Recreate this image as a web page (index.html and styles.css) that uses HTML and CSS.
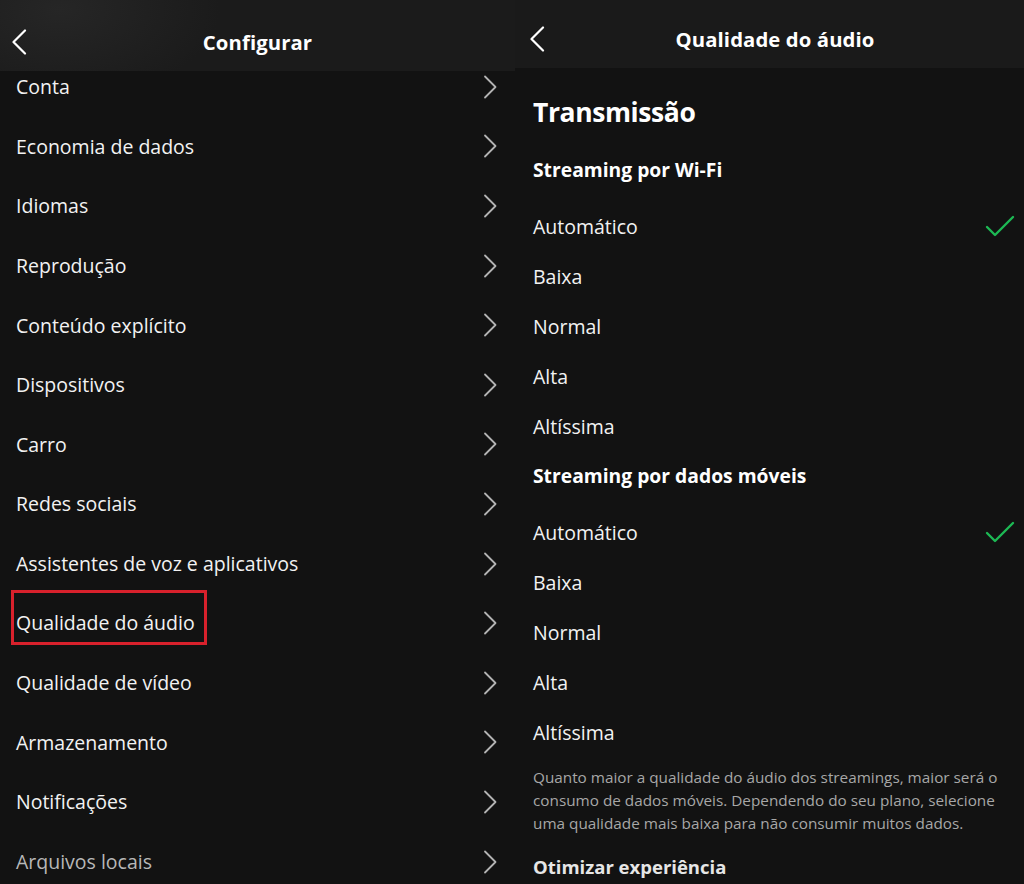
FILE: index.html
```html
<!DOCTYPE html>
<html lang="pt-BR">
<head>
    <meta charset="UTF-8">
    <meta name="viewport" content="width=device-width, initial-scale=1.0">
    <title>Configurar - Qualidade do áudio</title>
    <link rel="stylesheet" href="styles.css">
</head>
<body>
    <!-- Left screen: settings list -->
    <section class="screen screen-settings">
        <header class="top-bar top-bar-settings">
            <button class="back-btn" aria-label="Voltar">
                <svg width="16" height="26" viewBox="0 0 16 26" fill="none" stroke="currentColor" stroke-width="2.2" stroke-linecap="round" stroke-linejoin="round">
                    <polyline points="14 1.5 2.5 13 14 24.5"></polyline>
                </svg>
            </button>
            <h1 class="top-title">Configurar</h1>
        </header>

        <ul class="settings-list">
            <li class="settings-row"><span>Conta</span><svg class="chevron" viewBox="0 0 14 24"><polyline points="2 1.5 12.5 12 2 22.5"></polyline></svg></li>
            <li class="settings-row"><span>Economia de dados</span><svg class="chevron" viewBox="0 0 14 24"><polyline points="2 1.5 12.5 12 2 22.5"></polyline></svg></li>
            <li class="settings-row"><span>Idiomas</span><svg class="chevron" viewBox="0 0 14 24"><polyline points="2 1.5 12.5 12 2 22.5"></polyline></svg></li>
            <li class="settings-row"><span>Reprodução</span><svg class="chevron" viewBox="0 0 14 24"><polyline points="2 1.5 12.5 12 2 22.5"></polyline></svg></li>
            <li class="settings-row"><span>Conteúdo explícito</span><svg class="chevron" viewBox="0 0 14 24"><polyline points="2 1.5 12.5 12 2 22.5"></polyline></svg></li>
            <li class="settings-row"><span>Dispositivos</span><svg class="chevron" viewBox="0 0 14 24"><polyline points="2 1.5 12.5 12 2 22.5"></polyline></svg></li>
            <li class="settings-row"><span>Carro</span><svg class="chevron" viewBox="0 0 14 24"><polyline points="2 1.5 12.5 12 2 22.5"></polyline></svg></li>
            <li class="settings-row"><span>Redes sociais</span><svg class="chevron" viewBox="0 0 14 24"><polyline points="2 1.5 12.5 12 2 22.5"></polyline></svg></li>
            <li class="settings-row"><span>Assistentes de voz e aplicativos</span><svg class="chevron" viewBox="0 0 14 24"><polyline points="2 1.5 12.5 12 2 22.5"></polyline></svg></li>
            <li class="settings-row"><span class="highlight">Qualidade do áudio</span><svg class="chevron" viewBox="0 0 14 24"><polyline points="2 1.5 12.5 12 2 22.5"></polyline></svg></li>
            <li class="settings-row"><span>Qualidade de vídeo</span><svg class="chevron" viewBox="0 0 14 24"><polyline points="2 1.5 12.5 12 2 22.5"></polyline></svg></li>
            <li class="settings-row"><span>Armazenamento</span><svg class="chevron" viewBox="0 0 14 24"><polyline points="2 1.5 12.5 12 2 22.5"></polyline></svg></li>
            <li class="settings-row"><span>Notificações</span><svg class="chevron" viewBox="0 0 14 24"><polyline points="2 1.5 12.5 12 2 22.5"></polyline></svg></li>
            <li class="settings-row settings-row-faded"><span>Arquivos locais</span><svg class="chevron" viewBox="0 0 14 24"><polyline points="2 1.5 12.5 12 2 22.5"></polyline></svg></li>
        </ul>
    </section>

    <!-- Right screen: audio quality -->
    <section class="screen screen-quality">
        <header class="top-bar top-bar-quality">
            <button class="back-btn" aria-label="Voltar">
                <svg width="16" height="26" viewBox="0 0 16 26" fill="none" stroke="currentColor" stroke-width="2.2" stroke-linecap="round" stroke-linejoin="round">
                    <polyline points="14 1.5 2.5 13 14 24.5"></polyline>
                </svg>
            </button>
            <h1 class="top-title">Qualidade do áudio</h1>
        </header>

        <div class="quality-content">
            <h2 class="section-title">Transmissão</h2>

            <h3 class="group-title">Streaming por Wi-Fi</h3>
            <ul class="option-list">
                <li class="option selected">Automático<svg class="check" viewBox="0 0 30 24"><polyline points="2 13 10 21 28 3"></polyline></svg></li>
                <li class="option">Baixa</li>
                <li class="option">Normal</li>
                <li class="option">Alta</li>
                <li class="option">Altíssima</li>
            </ul>

            <h3 class="group-title">Streaming por dados móveis</h3>
            <ul class="option-list">
                <li class="option selected">Automático<svg class="check" viewBox="0 0 30 24"><polyline points="2 13 10 21 28 3"></polyline></svg></li>
                <li class="option">Baixa</li>
                <li class="option">Normal</li>
                <li class="option">Alta</li>
                <li class="option">Altíssima</li>
            </ul>

            <p class="hint">Quanto maior a qualidade do áudio dos streamings, maior será o consumo de dados móveis. Dependendo do seu plano, selecione uma qualidade mais baixa para não consumir muitos dados.</p>

            <h3 class="group-title group-title-next">Otimizar experiência</h3>
        </div>
    </section>
</body>
</html>
```

FILE: styles.css
```css
body {
    margin: 0;
    padding: 0;
    width: 1024px;
    height: 884px;
    overflow: hidden;
    background: #121212;
    font-family: 'Open Sans', 'Noto Sans', sans-serif;
    color: #ffffff;
    display: flex;
}

ul {
    list-style: none;
    margin: 0;
    padding: 0;
}

/* Screens */
.screen {
    display: flex;
    flex-direction: column;
    background: #121212;
    overflow: hidden;
}

.screen-settings {
    width: 515px;
}

.screen-quality {
    width: 509px;
}

/* Top bars */
.top-bar {
    position: relative;
    z-index: 2;
    display: flex;
    align-items: center;
    justify-content: center;
    flex-shrink: 0;
}

.top-bar-settings {
    height: 71px;
    background: radial-gradient(ellipse 160px 90px at 60px 10px, #262626 0%, #1b1b1b 100%);
}

.top-bar-quality {
    height: 68px;
    background: #1a1a1a;
    padding-left: 11px;
}

.top-title {
    margin: 0;
    font-size: 20.3px;
    font-weight: 700;
    letter-spacing: 0.1px;
}

.top-bar-settings .top-title {
    margin-top: 13px;
}

.top-bar-quality .top-title {
    margin-top: 10px;
}

.back-btn {
    position: absolute;
    top: 29px;
    left: 11px;
    width: 16px;
    height: 26px;
    padding: 0;
    background: none;
    border: none;
    color: #ffffff;
    cursor: pointer;
}

.top-bar-quality .back-btn {
    top: 26px;
    left: 14px;
}

/* Settings list */
.settings-list {
    margin-top: -14px;
}

.settings-row {
    height: 59.6px;
    display: flex;
    align-items: center;
    justify-content: space-between;
    padding: 0 18px 0 16px;
    font-size: 19.5px;
    color: #f2f2f2;
}

.settings-row-faded {
    color: #b8b8b8;
}

.highlight {
    line-height: 26px;
    padding: 17px 9px 6px 2px;
    margin: 0 0 11px -2px;
    outline: 3px solid #d8212c;
}

.chevron {
    width: 14px;
    height: 24px;
    fill: none;
    stroke: #b3b3b3;
    stroke-width: 1.8;
    stroke-linecap: round;
    stroke-linejoin: round;
}

/* Audio quality */
.quality-content {
    padding: 0 9px 0 18px;
}

.section-title {
    margin: 27px 0 0;
    font-size: 26.5px;
    line-height: 34px;
    font-weight: 700;
    letter-spacing: -0.4px;
}

.group-title {
    margin: 16px 0 0;
    height: 50px;
    line-height: 50px;
    font-size: 19.3px;
    font-weight: 700;
}

.option-list + .group-title {
    margin-top: 0;
}

.option-list {
    padding-top: 6px;
}

.option {
    height: 50px;
    display: flex;
    align-items: center;
    justify-content: space-between;
    font-size: 19.5px;
    color: #f2f2f2;
}

.check {
    width: 30px;
    height: 24px;
    fill: none;
    stroke: #1db954;
    stroke-width: 2.4;
    stroke-linecap: round;
    stroke-linejoin: round;
}

.hint {
    margin: 9px 0 0;
    font-size: 15.3px;
    line-height: 23px;
    color: #a7a7a7;
}

.group-title-next {
    margin-top: 7px;
    font-size: 18.5px;
    color: #e6e6e6;
}
```
